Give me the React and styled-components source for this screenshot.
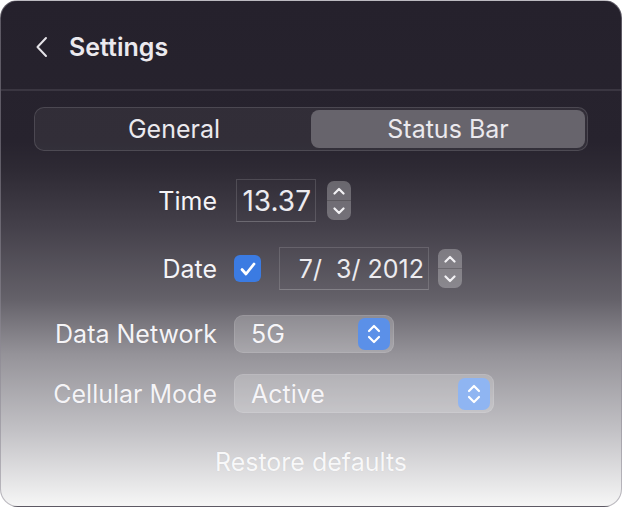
import React, { useState } from 'react';
import styled, { createGlobalStyle } from 'styled-components';

const Global = createGlobalStyle`
    html, body {
        margin: 0;
        padding: 0;
        background: #ffffff;
    }
    body {
        font-family: Inter, "Noto Sans", "Liberation Sans", sans-serif;
        -webkit-font-smoothing: antialiased;
    }
`

const Panel = styled.div`
    box-sizing: border-box;
    width: 622px;
    height: 507px;
    border-radius: 18px;
    border: 1px solid rgba(140, 136, 148, 0.55);
    overflow: hidden;
    background: linear-gradient(180deg,
        #25212c 0%,
        #27232e 28%,
        #2f2b35 34%,
        #45414b 45%,
        #646169 59%,
        #959399 70%,
        #c2c1c5 85%,
        #f6f6f6 100%);
    display: flex;
    flex-direction: column;
`

const Header = styled.div`
    box-sizing: border-box;
    height: 90px;
    display: flex;
    align-items: center;
    gap: 20px;
    padding: 4px 0 0 34px;
    border-bottom: 2px solid #3a3641;
    color: #ebe9ee;
    svg { cursor: pointer; }
`

const Title = styled.span`
    font-size: 25px;
    font-weight: 600;
`

const Segmented = styled.div`
    display: flex;
    margin: 16px 33px 0;
    height: 44px;
    padding: 2px;
    box-sizing: border-box;
    border-radius: 10px;
    background: rgba(255, 255, 255, 0.05);
    border: 1px solid rgba(255, 255, 255, 0.13);
`

const Segment = styled.div`
    flex: 1;
    display: flex;
    align-items: center;
    justify-content: center;
    border-radius: 8px;
    font-size: 25px;
    color: #ebe9ee;
    background: ${p => p.$active ? '#67646c' : 'transparent'};
    cursor: pointer;
`

const Form = styled.div`
    display: flex;
    flex-direction: column;
    margin-top: 28px;
`

const Row = styled.div`
    display: flex;
    align-items: center;
    gap: 17px;
    margin-top: ${p => p.$top || 0}px;
    height: ${p => p.$h}px;
`

const Label = styled.span`
    width: 216px;
    text-align: right;
    font-size: 25px;
    color: #f5f4f7;
    text-shadow: 0 0 1px rgba(0, 0, 0, 0.12);
`

const Controls = styled.div`
    display: flex;
    align-items: center;
    gap: ${p => p.$gap || 11}px;
    margin-left: ${p => p.$shift || 0}px;
`

const Field = styled.div`
    box-sizing: border-box;
    height: 43px;
    width: ${p => p.$w}px;
    display: flex;
    align-items: center;
    justify-content: flex-end;
    padding-right: 4px;
    font-size: ${p => p.$size || 25}px;
    color: #ecebef;
    border: 1px solid rgba(255, 255, 255, 0.14);
    border-bottom-color: rgba(255, 255, 255, 0.22);
    white-space: pre;
`

const Stepper = styled.div`
    box-sizing: border-box;
    width: 24px;
    height: 39px;
    border-radius: 7px;
    background: rgba(255, 255, 255, 0.27);
    display: flex;
    flex-direction: column;
    cursor: pointer;
    div {
        flex: 1;
        display: flex;
        align-items: center;
        justify-content: center;
    }
    div + div {
        border-top: 1px solid rgba(0, 0, 0, 0.18);
    }
`

const Check = styled.div`
    width: 27px;
    height: 27px;
    border-radius: 6px;
    background: #3b7be2;
    display: flex;
    align-items: center;
    justify-content: center;
    margin-right: 1px;
`

const Select = styled.div`
    box-sizing: border-box;
    width: ${p => p.$w}px;
    height: ${p => p.$h}px;
    border-radius: 9px;
    background: rgba(255, 255, 255, 0.2);
    border: 1px solid rgba(255, 255, 255, 0.1);
    display: flex;
    align-items: center;
    justify-content: space-between;
    padding: 0 3px 0 16px;
    font-size: 25px;
    color: #f6f5f8;
    text-shadow: 0 0 1px rgba(0, 0, 0, 0.1);
    cursor: pointer;
`

const SelectArrows = styled.div`
    width: 32px;
    height: 32px;
    border-radius: 7px;
    background: ${p => p.$color};
    display: flex;
    align-items: center;
    justify-content: center;
`

const Restore = styled.div`
    margin-top: 34px;
    text-align: center;
    font-size: 25px;
    color: #f8f8f9;
    text-shadow: 0 0 1px rgba(0, 0, 0, 0.1);
    cursor: pointer;
`

const Chevron = ({ up }) => (
    <svg width="12" height="8" viewBox="0 0 12 8">
        <path d={up ? 'M1.5 6.5 L6 2 L10.5 6.5' : 'M1.5 1.5 L6 6 L10.5 1.5'}
            fill="none" stroke="#f2f1f4" strokeWidth="2.2" strokeLinecap="round" strokeLinejoin="round" />
    </svg>
)

const StepButtons = () => (
    <Stepper>
        <div><Chevron up /></div>
        <div><Chevron /></div>
    </Stepper>
)

const UpDown = () => (
    <svg width="16" height="22" viewBox="0 0 16 22">
        <path d="M3 8 L8 3 L13 8 M3 14 L8 19 L13 14"
            fill="none" stroke="#ffffff" strokeWidth="2.2" strokeLinecap="round" strokeLinejoin="round" />
    </svg>
)

const App = () => {
    const [tab, setTab] = useState(1);

    return (
        <>
            <Global />
            <Panel>
                <Header>
                    <svg width="14" height="22" viewBox="0 0 14 22">
                        <path d="M11 2 L2.5 11 L11 20" fill="none" stroke="#e4e2e7" strokeWidth="2" strokeLinecap="round" strokeLinejoin="round" />
                    </svg>
                    <Title>Settings</Title>
                </Header>
                <Segmented>
                    <Segment $active={tab === 0} onClick={() => setTab(0)}>General</Segment>
                    <Segment $active={tab === 1} onClick={() => setTab(1)}>Status Bar</Segment>
                </Segmented>
                <Form>
                    <Row $h={43}>
                        <Label>Time</Label>
                        <Controls $shift={2}>
                            <Field $w={80} $size={28}>13.37</Field>
                            <StepButtons />
                        </Controls>
                    </Row>
                    <Row $h={43} $top={25}>
                        <Label>Date</Label>
                        <Controls $gap={9}>
                            <Check>
                                <svg width="18" height="16" viewBox="0 0 18 16">
                                    <path d="M3 8.5 L7 13 L15 3" fill="none" stroke="#ffffff" strokeWidth="2.8" strokeLinecap="round" strokeLinejoin="round" />
                                </svg>
                            </Check>
                            <Field $w={150} style={{ marginLeft: 8 }}>{'7/  3/ 2012'}</Field>
                            <StepButtons />
                        </Controls>
                    </Row>
                    <Row $h={38} $top={25}>
                        <Label>Data Network</Label>
                        <Select $w={160} $h={38}>
                            5G
                            <SelectArrows $color="#5b90e8"><UpDown /></SelectArrows>
                        </Select>
                    </Row>
                    <Row $h={39} $top={21}>
                        <Label>Cellular Mode</Label>
                        <Select $w={260} $h={39}>
                            Active
                            <SelectArrows $color="#8fb5f2"><UpDown /></SelectArrows>
                        </Select>
                    </Row>
                </Form>
                <Restore>Restore defaults</Restore>
            </Panel>
        </>
    );
};

export default App;
